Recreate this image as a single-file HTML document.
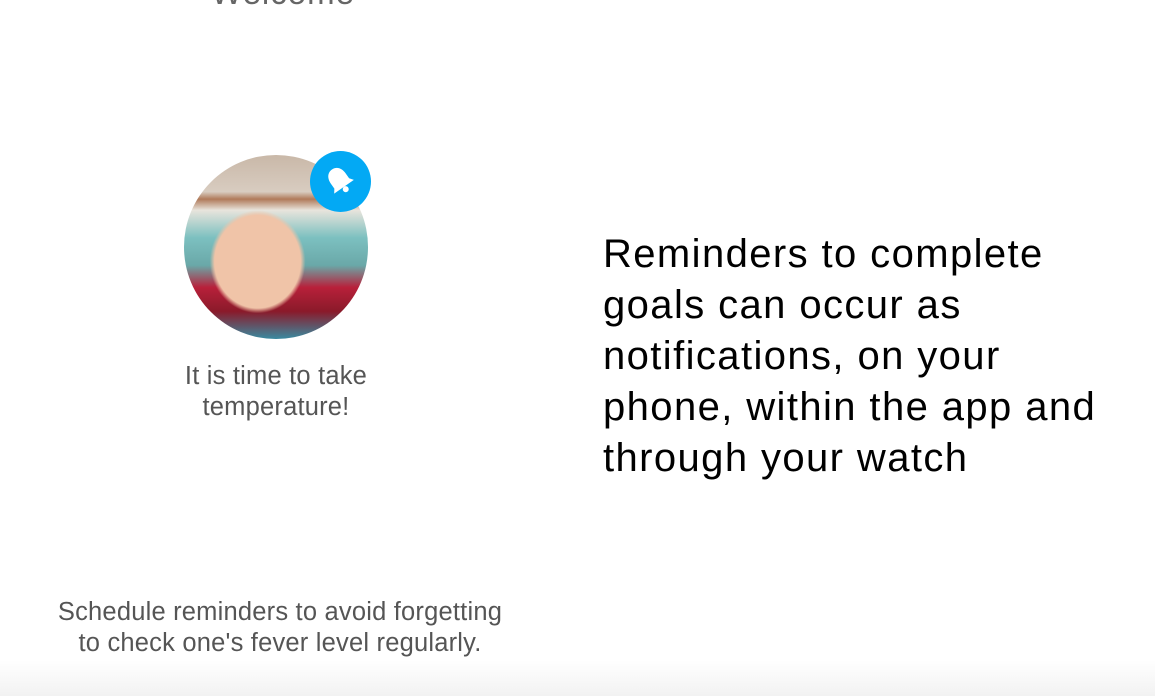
<!DOCTYPE html>
<html><head><meta charset="utf-8"><style>
html,body{margin:0;padding:0;}
body{width:1155px;height:696px;position:relative;overflow:hidden;background:#fff;font-family:"Liberation Sans",sans-serif;}
.grad{position:absolute;left:0;right:0;top:660px;height:36px;background:linear-gradient(#fff,#f2f2f2);}
.welcome{position:absolute;left:133px;width:300px;top:-26px;text-align:center;font-size:33px;color:#666;letter-spacing:1px;}
.photo{position:absolute;left:184px;top:155px;width:184px;height:184px;border-radius:50%;overflow:hidden;
background:radial-gradient(ellipse 26% 28% at 40% 58%,#f0c4a8 0 90%,transparent 100%),
linear-gradient(180deg,#c9b8a8 0,#d8ccc0 20%,#b07a5a 24%,#e8e4dc 30%,#7cc0c0 45%,#6aa8a8 60%,#b8203a 72%,#8a1a2a 85%,#3a8aa0 100%);}
.badge{position:absolute;left:310px;top:151px;width:61px;height:61px;border-radius:50%;background:#03a9f4;}
.cap{position:absolute;text-align:center;color:#555;font-size:25.5px;line-height:31px;letter-spacing:0.2px;}
.main{position:absolute;left:603px;top:229px;font-size:40px;line-height:51px;color:#000;letter-spacing:1.4px;}
</style></head><body>
<div class="welcome">Welcome</div>
<div class="photo"></div>
<div class="badge"><svg width="61" height="61" viewBox="0 0 61 61"><g transform="rotate(-35 30 30)" fill="#fff"><path d="M30 16c-6 0-9 5-9 11v6l-3 4h24l-3-4v-6c0-6-3-11-9-11z"/><circle cx="30" cy="40" r="3"/></g></svg></div>
<div class="cap" style="left:126px;width:300px;top:361px;">It is time to take<br>temperature!</div>
<div class="main">Reminders to complete<br>goals can occur as<br>notifications, on your<br>phone, within the app and<br>through your watch</div>
<div class="cap" style="left:30px;width:500px;top:597px;">Schedule reminders to avoid forgetting<br>to check one's fever level regularly.</div>
<div class="grad"></div>
</body></html>
